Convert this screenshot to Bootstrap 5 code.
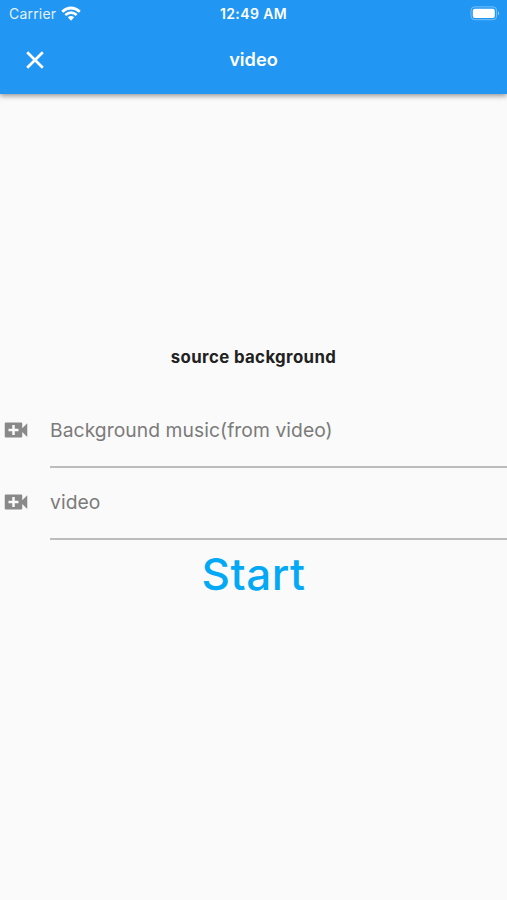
<!DOCTYPE html>
<html lang="en">
<head>
<meta charset="utf-8">
<meta name="viewport" content="width=device-width, initial-scale=1">
<title>video</title>
<link rel="stylesheet" href="https://cdn.jsdelivr.net/npm/bootstrap@5.3.0/dist/css/bootstrap.min.css">
<style>
  body { font-family: Inter, "Liberation Sans", sans-serif; background: #fafafa; }
  svg { display: block; flex: none; }
  .screen { height: 900px; }
  .app-header { height: 94px; background: #2196f3; box-shadow: 0 2px 5px rgba(0,0,0,.4); }
  .side { flex: 1 1 0; }
  .status { height: 27px; padding: 0 6px; font-size: 14px; line-height: 27px; }
  .carrier { letter-spacing: .2px; opacity: .88; margin-left: 3px; }
  .wifi { margin-left: 5px; }
  .clock { font-weight: 600; font-size: 14px; letter-spacing: .4px; }
  .title-bar { height: 64px; padding: 0 23px; }
  .page-title { font-size: 18.2px; font-weight: 600; line-height: 24px; padding-bottom: 1px; }
  .section-title { font-size: 16.8px; font-weight: 650; line-height: 24px; color: #212121; letter-spacing: .38px; margin-bottom: 37px; }
  .entry { height: 72px; gap: 19px; color: #898989; }
  .entry svg { margin: 9px 0 0 1px; }
  .field { height: 62px; border-bottom: 2px solid #bcbcbc; font-size: 19.3px; line-height: 48px; color: #7b7b7b; letter-spacing: .06px; }
  .start { color: #03a9f4; font-size: 44px; font-weight: 500; line-height: 48px; letter-spacing: .5px; text-decoration: none; }
  main { padding-top: 251px; }
</style>
</head>
<body>
<div class="screen d-flex flex-column overflow-hidden">
  <header class="app-header text-white flex-shrink-0">
    <div class="status d-flex align-items-center">
      <div class="side d-flex align-items-center">
        <span class="carrier">Carrier</span>
        <svg class="wifi" width="20" height="16" viewBox="0 0 20 16" fill="none" stroke="#fff" stroke-width="2.7" aria-hidden="true">
          <path d="M1.2 5.8Q10 -1.8 18.8 5.8M4.3 9Q10 4.2 15.7 9"/>
          <path d="M6.8 11.2Q10 8.6 13.2 11.2L10 14.8Z" fill="#fff" stroke="none"/>
        </svg>
      </div>
      <span class="clock">12:49 AM</span>
      <div class="side d-flex justify-content-end">
        <svg width="31" height="15" viewBox="0 0 31 15" aria-hidden="true">
          <rect x="1" y=".9" width="25.6" height="12.8" rx="3.6" fill="none" stroke="#fff" stroke-opacity=".4"/>
          <rect x="2.8" y="2.7" width="22" height="9.2" rx="2" fill="#fff"/>
          <path d="M28 5.2q2.4 2.1 0 4.2z" fill="#fff" fill-opacity=".5"/>
        </svg>
      </div>
    </div>
    <div class="title-bar d-flex align-items-center">
      <div class="side">
        <button type="button" class="btn p-0 border-0" aria-label="Close">
          <svg width="24" height="24" viewBox="0 0 24 24" stroke="#fff" stroke-width="2.7"><path d="M4.2 4.2 19.8 19.8M19.8 4.2 4.2 19.8"/></svg>
        </button>
      </div>
      <h1 class="page-title m-0">video</h1>
      <div class="side"></div>
    </div>
  </header>
  <main class="flex-grow-1">
    <h2 class="section-title text-center mt-0">source background</h2>
    <div class="entry d-flex">
      <svg width="30" height="30" viewBox="0 0 24 24" fill="currentColor" aria-hidden="true"><path d="M17 10.5V7c0-.55-.45-1-1-1H4c-.55 0-1 .45-1 1v10c0 .55.45 1 1 1h12c.55 0 1-.45 1-1v-3.5l4 4v-11l-4 4zM14 13h-3v3H9v-3H6v-2h3V8h2v3h3v2z"/></svg>
      <div class="field flex-grow-1">Background music(from video)</div>
    </div>
    <div class="entry d-flex">
      <svg width="30" height="30" viewBox="0 0 24 24" fill="currentColor" aria-hidden="true"><path d="M17 10.5V7c0-.55-.45-1-1-1H4c-.55 0-1 .45-1 1v10c0 .55.45 1 1 1h12c.55 0 1-.45 1-1v-3.5l4 4v-11l-4 4zM14 13h-3v3H9v-3H6v-2h3V8h2v3h3v2z"/></svg>
      <div class="field flex-grow-1">video</div>
    </div>
    <div class="text-center"><a href="#" class="start d-inline-block">Start</a></div>
  </main>
</div>
<script src="https://cdn.jsdelivr.net/npm/bootstrap@5.3.0/dist/js/bootstrap.bundle.min.js"></script>
</body>
</html>
